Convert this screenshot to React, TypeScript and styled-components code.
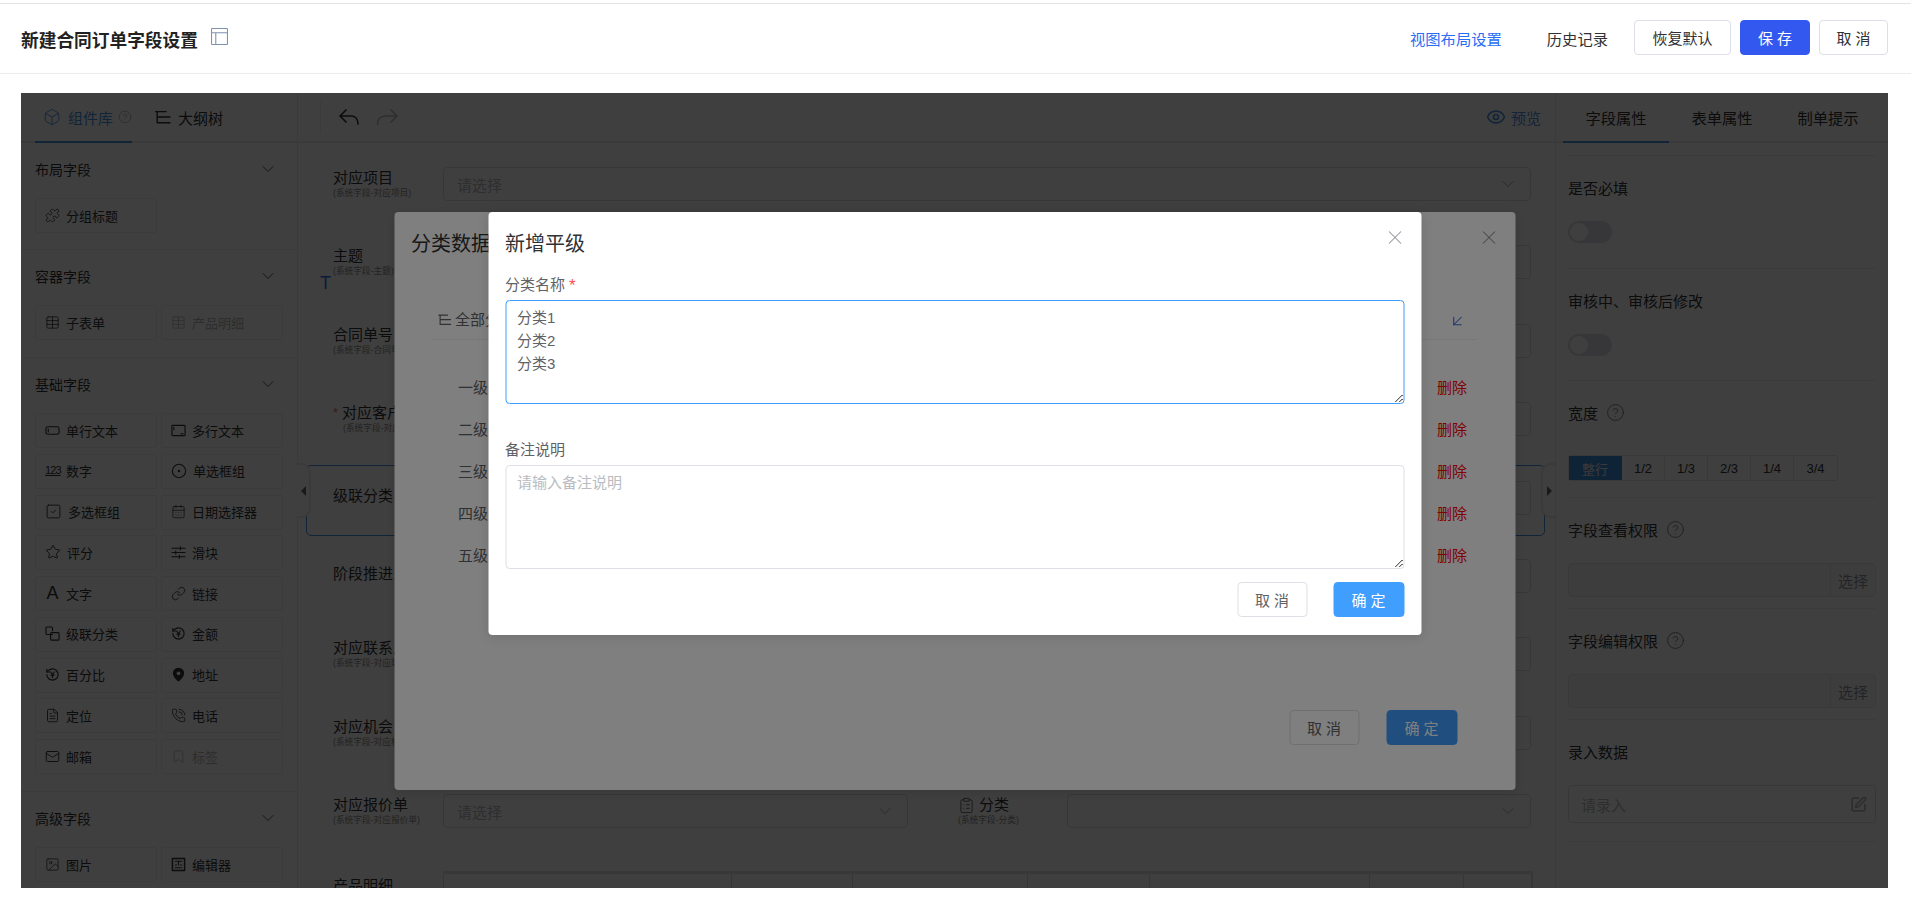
import React from "react";
import styled, { createGlobalStyle } from "styled-components";
import {
  Box, CircleHelp, Eye, ChevronDown, X, ArrowDownLeft, SquarePen, Table, Star, Link, FileText, Mail, Image, Bookmark, CalendarDays, SquareCheck, CircleDot, PhoneCall, Puzzle, ClipboardList,
} from "lucide-react";

const Global = createGlobalStyle`
  html, body { margin: 0; padding: 0; background: #fff; }
  body { font-family: "Liberation Sans", "Noto Sans CJK SC", sans-serif; color: #303133; }
  * { box-sizing: border-box; }
`;

const Page = styled.div`
  width: 1911px; height: 908px; overflow: hidden; border-top: 3px solid transparent;
  position: relative; background: #fff;
  &::before { content: ""; position: absolute; left: 0; right: 0; top: -1px; height: 2px; background: #e4e4e4; }
`;
const Header = styled.header`
  height: 71px; border-bottom: 1px solid #ececec; display: flex; align-items: center;
  padding: 0 23px 1px 21px;
`;
const Title = styled.h1`
  margin: 2px 0 0; font-size: 17.7px; font-weight: 700; color: #222; white-space: nowrap;
`;
const LayoutIcon = styled.span`
  display: flex; margin-left: 13px; margin-top: -2px; color: #7f93ad;
`;
const HeaderRight = styled.div`
  margin-left: auto; display: flex; align-items: center;
`;
const HeaderLink = styled.span<{ $blue?: boolean }>`
  font-size: 15.3px; color: ${(p) => (p.$blue ? "#2a6df4" : "#303133")}; margin-right: ${(p) => (p.$blue ? "45px" : "26px")};
`;
const HeadBtn = styled.button<{ $primary?: boolean; $w: number }>`
  width: ${(p) => p.$w}px; height: 35px; margin-left: ${(p) => (p.$primary ? "9px" : "0")}; margin-right: ${(p) => (p.$primary ? "9px" : "0")};
  border-radius: 4px; font: inherit; font-size: 15px; padding: 0;
  border: 1px solid ${(p) => (p.$primary ? "#3358f0" : "#dcdfe6")};
  background: ${(p) => (p.$primary ? "#3358f0" : "#fff")};
  color: ${(p) => (p.$primary ? "#fff" : "#303133")};
`;
const Spaced = styled.span`letter-spacing: 4px; margin-right: -4px;`;

const Frame = styled.div`
  position: relative; margin: 19px 0 0 21px; width: 1867px; height: 795px; overflow: hidden;
  display: flex; background: #fff;
`;
const LeftPanel = styled.aside`
  width: 277px; flex: none; border-right: 1px solid #e8e8e8;
`;
const Tabs = styled.div`
  height: 50px; border-bottom: 2px solid #eaeaea; display: flex; position: relative;
`;
const LeftTab = styled.div<{ $active?: boolean }>`
  display: flex; align-items: center; height: 50px; font-size: 15px; flex: none;
  color: ${(p) => (p.$active ? "#4a90e2" : "#303133")};
  width: ${(p) => (p.$active ? "97px" : "auto")}; margin-left: ${(p) => (p.$active ? "14px" : "22px")};
  padding-left: ${(p) => (p.$active ? "8px" : "0")}; gap: 7px;
  border-bottom: 2px solid ${(p) => (p.$active ? "#4a90e2" : "transparent")};
  svg { flex: none; }
`;
const TabHelp = styled.span`
  display: flex; margin-left: -2px; color: #909399;
`;
const Section = styled.section<{ $h: number }>`
  height: ${(p) => p.$h}px; border-bottom: 1px solid #eeeeee; padding: 0 15px 0 14px;
`;
const SectionHead = styled.div`
  height: 55px; padding: 0 4px 4px 0; display: flex; align-items: center; justify-content: space-between; font-size: 14px; color: #303133;
`;
const Grid = styled.div`
  display: grid; grid-template-columns: 122px 122px; gap: 5.75px 4px;
`;
const Card = styled.div<{ $off?: boolean }>`
  height: 35px; border: 1px solid #efefef; border-radius: 2px; display: flex; align-items: center; gap: 6px; padding: 0 0 1px 9px;
  font-size: 13px; color: ${(p) => (p.$off ? "#b5b5b5" : "#303133")};
  svg { flex: none; }
`;
const NumIcon = styled.u`
  width: 15px; font-size: 11px; letter-spacing: -0.9px; flex: none; white-space: nowrap; line-height: 13px;
`;
const LetterIcon = styled.span`
  width: 15px; font-size: 18px; line-height: 18px; text-align: center; flex: none;
`;
const Canvas = styled.main`
  width: 1258px; flex: none; border-right: 1px solid #e8e8e8; position: relative;
`;
const Toolbar = styled.div`
  height: 50px; border-bottom: 2px solid #eaeaea; display: flex; align-items: center; padding: 0 14px 0 22px; color: #303133;
`;
const ToolSep = styled.span`width: 1px; height: 32px; background: #eee; margin-right: 18px;`;
const Redo = styled.span`display: flex; margin-left: 17px; color: #bbb;`;
const Preview = styled.span`
  margin-left: auto; display: flex; align-items: center; gap: 5px; color: #4a90e2; font-size: 15px;
`;
const Form = styled.div`
  padding: 24px 24px 0 35px; position: relative;
`;
const FieldRow = styled.div<{ $h: number }>`
  display: flex; height: ${(p) => p.$h}px; position: relative;
`;
const Selected = styled.div`
  position: absolute; left: 8px; right: 10px; top: 322px; height: 71px; border: 1px solid #4a90e2; border-radius: 5px;
`;
const BlueT = styled.span`
  position: absolute; left: 22px; top: 180px; font-size: 18px; line-height: 20px; color: #2a6df4;
`;
const FieldLabel = styled.div<{ $second?: boolean; $plain?: boolean }>`
  width: ${(p) => (p.$second ? "109px" : "110px")}; flex: none; font-size: 15px; color: #303133; padding-top: ${(p) => (p.$plain ? "6px" : "2px")}; line-height: 18px;
  ${(p) => (p.$second ? "margin-left: 50px;" : "")}
`;
const LabelLine = styled.span`
  display: flex; align-items: center; gap: 4px; white-space: nowrap;
`;
const SmallNote = styled.small<{ $indent?: boolean }>`
  display: block; font-size: 8.7px; line-height: 12px; color: #8a8a8a; white-space: nowrap; margin-left: ${(p) => (p.$indent ? "10px" : "0")};
`;
const ReqMark = styled.span`
  color: #f56c6c; font-size: 13px; margin-right: -1px; width: 6px;
`;
const Select = styled.div<{ $w?: number }>`
  width: ${(p) => (p.$w ? p.$w + "px" : "auto")}; flex: ${(p) => (p.$w ? "none" : "1")}; height: 34px; border: 1px solid #dcdfe6; border-radius: 4px; display: flex; align-items: center; justify-content: space-between;
  padding: 0 12px 0 13px; font-size: 15px; color: #b8b8b8; svg { color: #999; }
`;
const TableTop = styled.div`
  flex: 1; height: 40px; border: 1px solid #dcdfe6; border-top: 3px solid #e2e2e2; display: flex;
`;
const TableCell = styled.div<{ $w: number }>`
  width: ${(p) => p.$w}px; border-right: 1px solid #dcdfe6; flex: none;
`;
const Handle = styled.span<{ $right?: boolean }>`
  position: absolute; top: 370px; ${(p) => (p.$right ? "right: 0;" : "left: -1px;")} width: 14px; height: 55px; background: #fff;
  border: 2px solid #e8e8e8; ${(p) => (p.$right ? "border-right: none; border-radius: 10px 0 0 10px;" : "border-left: none; border-radius: 0 10px 10px 0;")}
  display: flex; align-items: center; justify-content: center;
  &::after { content: ""; border: 5px solid transparent; ${(p) => (p.$right ? "border-left: 5px solid #666; margin-left: 5px;" : "border-right: 5px solid #666; margin-right: 5px;")} }
`;
const RightPanel = styled.aside`
  flex: 1; min-width: 0; padding: 0;
`;
const RightTabs = styled.div`
  height: 50px; border-bottom: 2px solid #eaeaea; display: flex; padding-left: 7px;
`;
const RightTab = styled.div<{ $active?: boolean }>`
  width: 106px; height: 50px; display: flex; align-items: center; justify-content: center; font-size: 15.3px; color: #303133;
  border-bottom: 2px solid ${(p) => (p.$active ? "#4a90e2" : "transparent")};
`;
const Props = styled.div`
  margin: 12px 12px 0; border-top: 1px solid #eee;
`;
const Prop = styled.div<{ $h: number }>`
  height: ${(p) => p.$h}px; border-bottom: 1px solid #eee; position: relative;
`;
const PropLabel = styled.div`
  height: 65px; padding-bottom: 2px; display: flex; align-items: center; gap: 8px; font-size: 15px; color: #303133; svg { color: #606266; }
`;
const Toggle = styled.div`
  width: 44px; height: 22px; border-radius: 11px; background: #dcdfe6; padding: 2px;
  &::after { content: ""; display: block; width: 18px; height: 18px; border-radius: 50%; background: #fff; }
`;
const Segments = styled.div`
  display: inline-flex; height: 26px; border: 1px solid #e4e7ed; border-radius: 3px; margin-top: 9px;
`;
const Segment = styled.div<{ $active?: boolean; $w: number }>`
  width: ${(p) => p.$w}px; display: flex; align-items: center; justify-content: center; font-size: 13px;
  background: ${(p) => (p.$active ? "#3f8cdd" : "transparent")}; color: ${(p) => (p.$active ? "#e8e8e8" : "#303133")};
  border-right: 1px solid ${(p) => (p.$active ? "transparent" : "#e4e7ed")};
  &:last-child { border-right: none; }
`;
const AddonInput = styled.div`
  height: 34px; border: 1px solid #e4e7ed; border-radius: 4px; background: #f5f7fa; display: flex; justify-content: flex-end;
`;
const Addon = styled.div`
  width: 45px; border-left: 1px solid #e4e7ed; font-size: 15px; color: #909399; display: flex; align-items: center; justify-content: center;
`;
const EntryInput = styled.div`
  height: 38px; border: 1px solid #dcdfe6; border-radius: 4px; display: flex; align-items: center; justify-content: space-between; padding: 0 8px 0 12px; font-size: 15px; color: #b8b8b8;
`;

const Mask = styled.div`
  position: absolute; inset: 0; background: rgba(0, 0, 0, 0.5);
`;
const Dialog = styled.div<{ $w: number; $h: number }>`
  position: absolute; top: 119px; left: 50%; transform: translateX(-50%); width: ${(p) => p.$w}px; height: ${(p) => p.$h}px;
  background: #fff; border-radius: 4px; box-shadow: 0 2px 12px rgba(0, 0, 0, 0.12); color: #606266;
`;
const DialogHead = styled.div`
  height: 50px; display: flex; align-items: flex-start; justify-content: space-between; padding: 18px 15px 0 17px;
`;
const DialogTitle = styled.span`
  font-size: 20px; line-height: 28px; color: #303133; white-space: nowrap;
`;
const CloseX = styled.span`display: flex; margin-top: -4.5px; color: #909399;`;
const TreeHead = styled.div`
  margin: 48px 39px 0 38px; height: 30px; display: flex; align-items: flex-start; justify-content: space-between; border-bottom: 1px solid #ebeef5; font-size: 15px; color: #606266; padding: 2px 10px 0 5px;
`;
const TreeName = styled.span`display: flex; align-items: center; gap: 4px; line-height: 16px;`;
const LevelRow = styled.div`
  height: 41.9px; display: flex; align-items: center; justify-content: space-between; padding: 0 48px 0 64px; font-size: 15px; color: #606266;
`;
const LevelList = styled.div`padding-top: 26px;`;
const Danger = styled.span`color: #ff0000;`;
const DialogFoot = styled.div<{ $top: number; $gap: number; $pad: number }>`
  display: flex; justify-content: flex-end; gap: ${(p) => p.$gap}px; padding: ${(p) => p.$top}px ${(p) => p.$pad}px 0 0;
`;
const DlgBtn = styled.button<{ $primary?: boolean }>`
  width: ${(p) => (p.$primary ? "71px" : "70px")}; height: 35px; padding: 0; border-radius: 4px; font: inherit; font-size: 15px;
  border: 1px solid ${(p) => (p.$primary ? "#409eff" : "#dcdfe6")};
  background: ${(p) => (p.$primary ? "#409eff" : "#fff")};
  color: ${(p) => (p.$primary ? "#fff" : "#606266")};
`;
const Body = styled.div`padding: 0 17px;`;
const FieldTitle = styled.label<{ $top: number }>`
  display: flex; align-items: center; height: 22px; font-size: 15px; color: #606266; gap: 4px; margin-top: ${(p) => p.$top}px;
`;
const Star2 = styled.span`color: #ff4d4f; font-size: 17px; line-height: 14px; padding-top: 5px;`;
const Area = styled.textarea<{ $focus?: boolean }>`
  display: block; width: 100%; height: 104px; margin-top: 6px; border-radius: 4px; padding: 5px 11px; font: inherit; font-size: 15px; line-height: 23px; color: #606266; outline: none;
  border: 1px solid ${(p) => (p.$focus ? "#409eff" : "#dcdfe6")};
  resize: vertical;
  &::placeholder { color: #b9bcc2; }
`;

type IP = { d: React.ReactNode; fill?: string; w?: number; size?: number; view?: string };
const Ico = ({ d, fill = "none", w = 1.2, size = 15, view = "0 0 16 16" }: IP) => (
  <svg width={size} height={size} viewBox={view} fill={fill} stroke="currentColor" strokeWidth={w} strokeLinecap="round" strokeLinejoin="round">{d}</svg>
);
const TreeGlyph = ({ size = 17 }: { size?: number }) => (
  <Ico size={size} w={1.3} d={<path d="M1.5 2.5h10M3 2.5v10.5h2M5 7.5h10M3 7.5h2M5 13h10" />} />
);
const Money = () => (
  <Ico view="0 0 24 24" w={1.8} d={<><path d="M3 12a9 9 0 1 0 9-9 9.75 9.75 0 0 0-6.74 2.74L3 8" /><path d="M3 3.5V8h4.5" /><path d="M9 8l3 4 3-4M12 12v5M9.5 13h5" /></>} />
);
const icons = {
  single: <Ico d={<><rect x="1" y="4" width="14" height="8" rx="2" /><path d="M3.5 6.5v3" /></>} />,
  multi: <Ico d={<><rect x="1" y="2.5" width="14" height="11" rx="0.8" /><path d="M10.5 11.5H13M3 4.5V7" /></>} />,
  slider: <Ico d={<path d="M1 3.5h14M1 8h14M1 12.5h14M10 2v3M5 6.5v3M9 11v3" />} />,
  cascade: <Ico d={<><path d="M8 9H2a1 1 0 0 1-1-1V2a1 1 0 0 1 1-1h5a1 1 0 0 1 1 1v3" /><rect x="6" y="7" width="9" height="8" rx="1" /></>} />,
  pin: <Ico view="0 0 24 24" w={2} fill="currentColor" d={<><path d="M20 10c0 4.993-5.539 10.193-7.399 11.799a1 1 0 0 1-1.202 0C9.539 20.193 4 14.993 4 10a8 8 0 0 1 16 0" /><circle cx="12" cy="10" r="3" fill="#fff" stroke="none" /></>} />,
  editor: <Ico w={1.2} d={<><rect x="1.5" y="1.5" width="13" height="13" strokeWidth="1.6" /><path d="M4.5 4.5h7M8 4.5v4M4.5 11.5h7M4.5 8.5h1.5M10 8.5h1.5" /></>} />,
};

const c = 15;
const basic: [string, React.ReactNode][] = [
  ["单行文本", icons.single], ["多行文本", icons.multi],
  ["数字", <NumIcon>123</NumIcon>], ["单选框组", <CircleDot size={16} strokeWidth={1.6} />],
  ["多选框组", <SquareCheck size={17} strokeWidth={1.3} />], ["日期选择器", <CalendarDays size={c} strokeWidth={1.2} />],
  ["评分", <Star size={16} strokeWidth={1.4} />], ["滑块", icons.slider],
  ["文字", <LetterIcon>A</LetterIcon>], ["链接", <Link size={c} strokeWidth={1.4} />],
  ["级联分类", icons.cascade], ["金额", <Money />],
  ["百分比", <Money />], ["地址", icons.pin],
  ["定位", <FileText size={c} strokeWidth={1.4} />], ["电话", <PhoneCall size={c} strokeWidth={1.3} />],
  ["邮箱", <Mail size={c} strokeWidth={1.5} />], ["标签", <Bookmark size={c} strokeWidth={1.3} />],
];

const rows: [string, string, number, boolean?][] = [
  ["对应项目", "(系统字段-对应项目)", 78],
  ["主题", "(系统字段-主题)", 79],
  ["合同单号", "(系统字段-合同单号)", 78],
  ["对应客户", "(系统字段-对应客户)", 79, true],
  ["级联分类", "", 78],
  ["阶段推进", "", 78],
  ["对应联系人", "(系统字段-对应联系人)", 79],
  ["对应机会", "(系统字段-对应机会)", 78],
  ["对应报价单", "(系统字段-对应报价单)", 77],
];
const down = <ChevronDown size={20} strokeWidth={1} />;
const help = <CircleHelp size={19} strokeWidth={1} />;

export default function App() {
  return (
    <Page>
      <Global />
      <Header>
        <Title>新建合同订单字段设置</Title>
        <LayoutIcon>
          <Ico size={17} w={1} d={<><rect x="0.5" y="0.5" width="15" height="15" rx="0.5" /><path d="M0.5 4.5h15M4.5 4.5v11" /></>} />
        </LayoutIcon>
        <HeaderRight>
          <HeaderLink $blue>视图布局设置</HeaderLink>
          <HeaderLink>历史记录</HeaderLink>
          <HeadBtn $w={97}>恢复默认</HeadBtn>
          <HeadBtn $w={70} $primary><Spaced>保存</Spaced></HeadBtn>
          <HeadBtn $w={69}><Spaced>取消</Spaced></HeadBtn>
        </HeaderRight>
      </Header>
      <Frame>
        <LeftPanel>
          <Tabs>
            <LeftTab $active><Box size={18} strokeWidth={1.2} />组件库<TabHelp><CircleHelp size={14} strokeWidth={1} /></TabHelp></LeftTab>
            <LeftTab><TreeGlyph />大纲树</LeftTab>
          </Tabs>
          <Section $h={107}>
            <SectionHead>布局字段{down}</SectionHead>
            <Grid><Card><Puzzle size={c} strokeWidth={1.3} />分组标题</Card></Grid>
          </Section>
          <Section $h={108}>
            <SectionHead>容器字段{down}</SectionHead>
            <Grid><Card><Table size={c} strokeWidth={1.3} />子表单</Card><Card $off><Table size={c} strokeWidth={1.3} />产品明细</Card></Grid>
          </Section>
          <Section $h={434}>
            <SectionHead>基础字段{down}</SectionHead>
            <Grid>{basic.map(([t, i]) => <Card key={t} $off={t === "标签"}>{i}{t}</Card>)}</Grid>
          </Section>
          <Section $h={100}>
            <SectionHead>高级字段{down}</SectionHead>
            <Grid><Card><Image size={c} strokeWidth={1.2} />图片</Card><Card>{icons.editor}编辑器</Card></Grid>
          </Section>
        </LeftPanel>
        <Canvas>
          <Toolbar>
            <ToolSep />
            <Ico size={20} view="0 0 20 16" w={1.7} d={<path d="M7 1L1 7l6 6M1 7h11c4 0 7 3 7 8" />} />
            <Redo><Ico size={22} view="0 0 22 16" w={1.7} d={<path d="M15 1l6 6-6 6M21 7H10C5 7 1.5 10 1.5 15" />} /></Redo>
            <Preview><Eye size={20} strokeWidth={2} />预览</Preview>
          </Toolbar>
          <Form>
            <Selected />
            {rows.map(([l, s, h, req], i) => (
              <FieldRow key={i} $h={h}>
                <FieldLabel $plain={!s}>
                  <LabelLine>{req ? <ReqMark>*</ReqMark> : null}{l}</LabelLine>
                  {s ? <SmallNote $indent={req}>{s}</SmallNote> : null}
                </FieldLabel>
                {i === 0 ? (
                  <Select>请选择{down}</Select>
                ) : (
                  <>
                    <Select $w={465}>{i === 8 ? "请选择" : ""}{i === 8 ? down : null}</Select>
                    <FieldLabel $second>
                      {i === 8 ? (
                        <>
                          <LabelLine><ClipboardList size={17} strokeWidth={1} />分类</LabelLine>
                          <SmallNote>(系统字段-分类)</SmallNote>
                        </>
                      ) : null}
                    </FieldLabel>
                    <Select><span />{i === 1 || i === 2 ? null : down}</Select>
                  </>
                )}
              </FieldRow>
            ))}
            <FieldRow $h={40}>
              <FieldLabel $plain>产品明细</FieldLabel>
              <TableTop>
                {[288, 121, 175, 122, 220, 94, 68].map((w, i) => <TableCell key={i} $w={w} />)}
              </TableTop>
            </FieldRow>
          </Form>
          <BlueT>T</BlueT>
          <Handle />
          <Handle $right />
        </Canvas>
        <RightPanel>
          <RightTabs>
            <RightTab $active>字段属性</RightTab>
            <RightTab>表单属性</RightTab>
            <RightTab>制单提示</RightTab>
          </RightTabs>
          <Props>
            <Prop $h={113}><PropLabel>是否必填</PropLabel><Toggle /></Prop>
            <Prop $h={112}><PropLabel>审核中、审核后修改</PropLabel><Toggle /></Prop>
            <Prop $h={117}>
              <PropLabel>宽度{help}</PropLabel>
              <Segments>
                <Segment $active $w={53}>整行</Segment>
                {["1/2", "1/3", "2/3", "1/4", "3/4"].map((t) => <Segment key={t} $w={43}>{t}</Segment>)}
              </Segments>
            </Prop>
            <Prop $h={111}><PropLabel>字段查看权限{help}</PropLabel><AddonInput><Addon>选择</Addon></AddonInput></Prop>
            <Prop $h={111}><PropLabel>字段编辑权限{help}</PropLabel><AddonInput><Addon>选择</Addon></AddonInput></Prop>
            <Prop $h={122}><PropLabel>录入数据</PropLabel><EntryInput>请录入<SquarePen size={17} strokeWidth={2.4} /></EntryInput></Prop>
          </Props>
        </RightPanel>
        <Mask />
        <Dialog $w={1121} $h={578}>
          <DialogHead><DialogTitle>分类数据设置</DialogTitle><CloseX><X size={23} strokeWidth={1.1} /></CloseX></DialogHead>
          <TreeHead>
            <TreeName><TreeGlyph size={14} />全部分类</TreeName>
            <ArrowDownLeft size={18} color="#3b6be0" strokeWidth={1.4} />
          </TreeHead>
          <LevelList>
            {["一级分类", "二级分类", "三级分类", "四级分类", "五级分类"].map((t) => (
              <LevelRow key={t}><span>{t}</span><Danger>删除</Danger></LevelRow>
            ))}
          </LevelList>
          <DialogFoot $top={135} $gap={27} $pad={58}>
            <DlgBtn><Spaced>取消</Spaced></DlgBtn>
            <DlgBtn $primary><Spaced>确定</Spaced></DlgBtn>
          </DialogFoot>
        </Dialog>
        <Mask />
        <Dialog $w={933} $h={423}>
          <DialogHead><DialogTitle>新增平级</DialogTitle><CloseX><X size={23} strokeWidth={1.1} /></CloseX></DialogHead>
          <Body>
            <FieldTitle $top={10}>分类名称<Star2>*</Star2></FieldTitle>
            <Area $focus defaultValue={"分类1\n分类2\n分类3"} />
            <FieldTitle $top={33}>备注说明</FieldTitle>
            <Area placeholder="请输入备注说明" />
          </Body>
          <DialogFoot $top={13} $gap={26} $pad={17}>
            <DlgBtn><Spaced>取消</Spaced></DlgBtn>
            <DlgBtn $primary><Spaced>确定</Spaced></DlgBtn>
          </DialogFoot>
        </Dialog>
      </Frame>
    </Page>
  );
}
